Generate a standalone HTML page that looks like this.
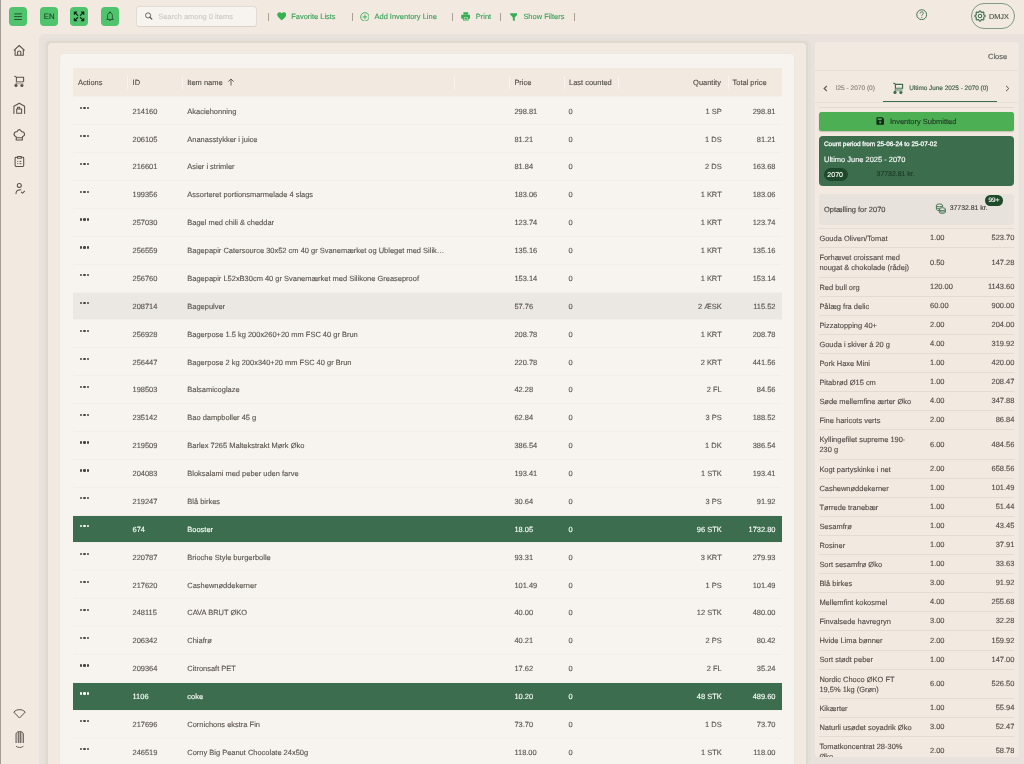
<!DOCTYPE html>
<html><head><meta charset="utf-8"><title>Inventory</title>
<style>
*{box-sizing:border-box;margin:0;padding:0}
html,body{-webkit-font-smoothing:antialiased;text-rendering:geometricPrecision;width:1024px;height:764px;overflow:hidden;background:#f2e9e0;font-family:"Liberation Sans",sans-serif;color:#5c5650;font-size:7.47px;line-height:1}
.a{position:absolute}
.lb{left:0;top:0;width:1px;height:764px;background:#a39d97}
.gb{top:7px;width:18px;height:18.5px;background:#50c46d;border-radius:4px}
.gb svg{position:absolute;left:0;top:0}
.search{left:136px;top:5.9px;width:121px;height:21.2px;background:#f7f4f0;border:1px solid #e0dbd4;border-bottom-color:#d9d3cc;border-radius:3.5px}
.search .ph{position:absolute;left:21.2px;top:5.9px;color:#cdc8c2;font-size:7.47px}
.sep{top:12.8px;width:1px;height:7.9px;background:#ab9f90}
.tb{top:13.4px;color:#3aa158;font-size:7.47px;white-space:nowrap}
.frame{left:39px;top:34px;width:990px;height:740px;background:#e8e1dc;border-radius:5px 0 0 0}
.mainp{left:48px;top:42.8px;width:758px;height:730px;background:#f2e9e0;border-radius:3.5px}
.cont{left:59px;top:53.2px;width:736px;height:720px;background:#f7f4f0;border:1px solid #ece8e3;border-radius:4px}
.tbl{left:73px;top:68px;width:708.5px}
.th{position:relative;height:28.4px;background:#f2e9e0;color:#534d47}
.th .h{position:absolute;top:10.8px;white-space:nowrap}
.th .vs{position:absolute;top:8.4px;width:1px;height:12.5px;background:#f8f5f1}
.tr{position:relative;height:27.88px;border-top:1px solid #f2eeea;color:#5a534d;background-clip:padding-box}
.tr.hov{background:#ebe7e3}
.tr.sel{background:#3b6d4e;color:#fff;background-clip:padding-box}
.c{position:absolute;top:10.3px;white-space:nowrap}
.dots{left:7px;top:9.6px}
.dots i{position:absolute;top:-0.1px;width:2.25px;height:2.25px;border-radius:50%;background:#4a443f}
.dots i:nth-child(1){left:0.1px}
.dots i:nth-child(2){left:3.4px}
.dots i:nth-child(3){left:6.7px}
.sel .dots i{background:#fff}
.cid{left:59.5px}
.cname{left:114.3px}
.cprice{left:441.4px}
.clast{left:495.6px}
.cqty{right:59.8px}
.ctot{right:6px}
.rp{left:815px;top:42px;width:203.3px;box-shadow:1px 0 0 #ece8e4;height:714.5px;background:#f2e9e0;border-radius:3.5px;overflow:hidden}
.close{left:173px;top:10.5px;color:#545b54}
.hdiv{left:0;top:27.8px;width:100%;height:1.2px;background:#e5dfd7}
.tabs{left:0;top:29.6px;width:100%;height:31px}
.sr{position:relative;border-top:1px solid #e2dcd5;padding:4.9px 0 3.12px 0;line-height:10.1px;font-size:7.47px;color:#524c47}
.sn{padding-left:0}
.sq{position:absolute;left:110.6px;top:50%;margin-top:-5px}
.st{position:absolute;right:0;top:50%;margin-top:-5px}

#wrap{position:absolute;left:0;top:0;width:1024px;height:764px;overflow:hidden;will-change:transform;-webkit-text-stroke-width:0.12px}
.ring1{left:43.4px;top:38.8px;width:767.2px;height:740px;background:#e3dfd9;border-radius:6px}
.ring2{left:46.1px;top:41.3px;width:761.8px;height:740px;background:#dfd8cf;border-radius:4px}

</style></head><body>
<div id="wrap">
<div class="a lb"></div>
<!-- top green buttons -->
<div class="a gb" style="left:9px"><svg width="18" height="18.5" viewBox="0 0 18 18.5"><path d="M5.2 6.9H12.9M5.2 9.6H12.9M5.2 12.5H12.9" stroke="#1e3b26" stroke-width="0.85" fill="none"/></svg></div>
<div class="a gb" style="left:39.7px"><span class="a" style="left:4.1px;top:5.6px;font-size:7.8px;color:#1f3d28">EN</span></div>
<div class="a gb" style="left:70.1px"><svg width="18" height="18.5" viewBox="0 0 18 18.5"><g fill="#13261a" stroke="#13261a" stroke-width="1.2"><path d="M4.5 5.3L8 8.6M13.6 5.3L10.1 8.6M4.5 13.6L8 10.3M13.6 13.6L10.1 10.3" fill="none"/><path d="M4 4.8h3.2L4 8z M14.1 4.8h-3.2l3.2 3.2z M4 14.1h3.2L4 10.9z M14.1 14.1h-3.2l3.2-3.2z" stroke-width="0.4"/></g></svg></div>
<div class="a gb" style="left:101px"><svg width="18" height="18.5" viewBox="0 0 18 18.5"><path d="M9 5.6C7.4 5.6 6.6 7 6.6 8.7V10.9C6.6 11.6 6.1 12.1 5.6 12.4H12.4C11.9 12.1 11.4 11.6 11.4 10.9V8.7C11.4 7 10.6 5.6 9 5.6Z M9 4.9V5.6 M8 13.1C8.3 13.8 9.7 13.8 10 13.1" stroke="#1f3a26" stroke-width="0.75" fill="none" stroke-linejoin="round" stroke-linecap="round"/></svg></div>
<!-- search -->
<div class="a search"><svg class="a" style="left:7.2px;top:4.3px" width="9" height="9" viewBox="0 0 9 9"><circle cx="4.1" cy="4.4" r="2.55" stroke="#625d57" stroke-width="0.95" fill="none"/><path d="M5.9 6.2L7.8 8" stroke="#625d57" stroke-width="1.2" stroke-linecap="round"/></svg><span class="ph">Search among 0 items</span></div>
<!-- toolbar -->
<div class="a sep" style="left:268.3px"></div>
<svg class="a" style="left:276.8px;top:12px" width="9.4" height="8.7" viewBox="0 0 24 22"><path d="M12 21.5L10.3 19.9C4.2 14.4 0.5 11 0.5 6.5C0.5 3 3.2 0.3 6.7 0.3C8.7 0.3 10.7 1.3 12 2.8C13.3 1.3 15.3 0.3 17.3 0.3C20.8 0.3 23.5 3 23.5 6.5C23.5 11 19.8 14.4 13.7 19.9Z" fill="#35b152"/></svg>
<span class="a tb" style="left:291.2px">Favorite Lists</span>
<div class="a sep" style="left:351.6px"></div>
<svg class="a" style="left:359.6px;top:11.6px" width="9.8" height="9.8" viewBox="0 0 10 10"><circle cx="5" cy="5" r="4.3" stroke="#37ae55" stroke-width="0.95" fill="none"/><path d="M5 2.7V7.3M2.7 5H7.3" stroke="#37ae55" stroke-width="0.95"/></svg>
<span class="a tb" style="left:374.5px">Add Inventory Line</span>
<div class="a sep" style="left:452.2px"></div>
<svg class="a" style="left:460.6px;top:12.2px" width="9.6" height="8.8" viewBox="0 0 12 11"><path d="M3 0.3H9V3H3Z M0.3 3.5H11.7V8.3H9.5V10.7H2.5V8.3H0.3Z" fill="#35ae52"/><rect x="3.6" y="6.5" width="4.8" height="3.3" fill="#f2e9e0"/><rect x="4.2" y="7.1" width="3.6" height="2.2" fill="#35ae52"/></svg>
<span class="a tb" style="left:475.8px">Print</span>
<div class="a sep" style="left:500.2px"></div>
<svg class="a" style="left:509.6px;top:12.8px" width="7.6" height="8.6" viewBox="0 0 8 9"><path d="M0.2 0.3H7.8V1.6L5 4.6V8.7L3 7.6V4.6L0.2 1.6Z" fill="#36ad53"/></svg>
<span class="a tb" style="left:523.4px">Show Filters</span>
<div class="a sep" style="left:574px"></div>
<!-- help + user -->
<svg class="a" style="left:915.6px;top:8.8px" width="11.4" height="11.4" viewBox="0 0 12 12"><circle cx="6" cy="6" r="5.2" stroke="#3c6e4d" stroke-width="1" fill="none"/><path d="M4.3 4.6C4.3 3.6 5 3 6 3C7 3 7.7 3.6 7.7 4.5C7.7 5.6 6.1 5.7 6.1 7" stroke="#3c6e4d" stroke-width="1" fill="none"/><circle cx="6.1" cy="8.8" r="0.6" fill="#3c6e4d"/></svg>
<div class="a" style="left:970.6px;top:3.4px;width:44px;height:26px;border:1px solid #7e9a83;border-radius:13px"></div>
<svg class="a" style="left:974.1px;top:10.4px" width="12" height="12" viewBox="0 0 12 12"><path fill="none" stroke="#3b7050" stroke-width="1.05" stroke-linejoin="round" d="M11.10 6.00 L11.10 6.20 L11.08 6.40 L11.06 6.60 L11.04 6.80 L10.46 6.89 L9.89 6.93 L9.85 7.09 L9.80 7.24 L9.75 7.38 L9.70 7.53 L9.63 7.67 L9.56 7.82 L9.49 7.95 L9.41 8.09 L9.78 8.53 L10.13 9.00 L10.01 9.16 L9.88 9.31 L9.75 9.46 L9.61 9.61 L9.46 9.75 L9.31 9.88 L9.16 10.01 L9.00 10.13 L8.53 9.78 L8.09 9.41 L7.95 9.49 L7.82 9.56 L7.67 9.63 L7.53 9.70 L7.38 9.75 L7.24 9.80 L7.09 9.85 L6.93 9.89 L6.89 10.46 L6.80 11.04 L6.60 11.06 L6.40 11.08 L6.20 11.10 L6.00 11.10 L5.80 11.10 L5.60 11.08 L5.40 11.06 L5.20 11.04 L5.11 10.46 L5.07 9.89 L4.91 9.85 L4.76 9.80 L4.62 9.75 L4.47 9.70 L4.33 9.63 L4.18 9.56 L4.05 9.49 L3.91 9.41 L3.47 9.78 L3.00 10.13 L2.84 10.01 L2.69 9.88 L2.54 9.75 L2.39 9.61 L2.25 9.46 L2.12 9.31 L1.99 9.16 L1.87 9.00 L2.22 8.53 L2.59 8.09 L2.51 7.95 L2.44 7.82 L2.37 7.67 L2.30 7.53 L2.25 7.38 L2.20 7.24 L2.15 7.09 L2.11 6.93 L1.54 6.89 L0.96 6.80 L0.94 6.60 L0.92 6.40 L0.90 6.20 L0.90 6.00 L0.90 5.80 L0.92 5.60 L0.94 5.40 L0.96 5.20 L1.54 5.11 L2.11 5.07 L2.15 4.91 L2.20 4.76 L2.25 4.62 L2.30 4.47 L2.37 4.33 L2.44 4.18 L2.51 4.05 L2.59 3.91 L2.22 3.47 L1.87 3.00 L1.99 2.84 L2.12 2.69 L2.25 2.54 L2.39 2.39 L2.54 2.25 L2.69 2.12 L2.84 1.99 L3.00 1.87 L3.47 2.22 L3.91 2.59 L4.05 2.51 L4.18 2.44 L4.33 2.37 L4.47 2.30 L4.62 2.25 L4.76 2.20 L4.91 2.15 L5.07 2.11 L5.11 1.54 L5.20 0.96 L5.40 0.94 L5.60 0.92 L5.80 0.90 L6.00 0.90 L6.20 0.90 L6.40 0.92 L6.60 0.94 L6.80 0.96 L6.89 1.54 L6.93 2.11 L7.09 2.15 L7.24 2.20 L7.38 2.25 L7.53 2.30 L7.67 2.37 L7.82 2.44 L7.95 2.51 L8.09 2.59 L8.53 2.22 L9.00 1.87 L9.16 1.99 L9.31 2.12 L9.46 2.25 L9.61 2.39 L9.75 2.54 L9.88 2.69 L10.01 2.84 L10.13 3.00 L9.78 3.47 L9.41 3.91 L9.49 4.05 L9.56 4.18 L9.63 4.33 L9.70 4.47 L9.75 4.62 L9.80 4.76 L9.85 4.91 L9.89 5.07 L10.46 5.11 L11.04 5.20 L11.06 5.40 L11.08 5.60 L11.10 5.80Z"/><circle cx="6" cy="6" r="1.75" fill="none" stroke="#3b7050" stroke-width="1.05"/></svg>
<span class="a" style="left:989px;top:12.6px;font-size:7.3px;color:#475243">DMJX</span>
<!-- sidebar icons -->
<svg class="a" style="left:0;top:0" width="40" height="200" viewBox="0 0 40 200"><g stroke="#5a524b" stroke-width="1.05" fill="none" stroke-linejoin="round" stroke-linecap="round">
<path d="M14.2 50.2L19.2 45.5L24.2 50.2M15.1 49.3V55.2H23.3V49.3M17.6 55.2V52.1C17.6 50.6 20.8 50.6 20.8 52.1V55.2"/>
<path d="M14.7 76.2L16.4 77.1V84.4M16.4 77.3H23.6V81.4H16.4"/>
<path d="M13.9 113.4V106.3L19.3 103.3L24.6 106.3V113.4M16.7 113.3V109H21.6V113.3ZM17.6 109V107.3H19.7V109"/>
<path d="M16.2 136.8C14.5 136.2 13.8 134.8 14.2 133.4C14.6 132 16 131.5 17 131.8C17.5 130.2 18.3 129.6 19.3 129.6C20.3 129.6 21.1 130.2 21.6 131.8C22.6 131.5 24 132 24.4 133.4C24.8 134.8 24.1 136.2 22.4 136.8V140H16.2ZM16.2 137.8H22.4"/>
<path d="M17.3 157.3H16C15.4 157.3 15.1 157.6 15.1 158.2V165.6C15.1 166.2 15.4 166.5 16 166.5H22.8C23.4 166.5 23.7 166.2 23.7 165.6V158.2C23.7 157.6 23.4 157.3 22.8 157.3H21.5M17.5 156.4H21.3V158.3H17.5Z"/>
<circle cx="19.3" cy="185.5" r="2"/>
<path d="M16 193.6C16 191.3 17.3 189.8 20.8 189.8M21.4 192.1L22.6 193.2L24.6 191.2"/>
</g>
<g fill="#5a524b"><circle cx="16" cy="85.4" r="1.55"/><circle cx="21.9" cy="85.4" r="1.55"/><rect x="16.4" y="81.4" width="7" height="2.9" fill="#bdb6ae"/>
<rect x="17.2" y="160.9" width="1" height="0.9"/><rect x="19.5" y="160.9" width="1.9" height="0.9"/><rect x="17.2" y="163.2" width="1" height="0.9"/><rect x="19.5" y="163.2" width="1.9" height="0.9"/></g>
</svg>
<svg class="a" style="left:13.2px;top:708.9px" width="13" height="9.6" viewBox="0 0 26 19"><path d="M1.5 6C8 -0.5 18 -0.5 24.5 6L13 18Z" stroke="#5a524b" stroke-width="2" fill="none" stroke-linejoin="round"/></svg>
<svg class="a" style="left:15.3px;top:729.8px" width="9.4" height="18.6" viewBox="0 0 19 37"><path d="M2 26V8C2 1 17 1 17 8V26Z" fill="#c9c3bc"/><path d="M2 26V8C2 1 17 1 17 8V26M7.5 3V26M11.5 3V26M2 32.5C6 36 13 36 17 32.5" stroke="#5a524b" stroke-width="1.8" fill="none"/></svg>
<!-- frame -->
<div class="a frame"></div>
<div class="a ring1"></div>
<div class="a ring2"></div>
<div class="a mainp"></div>
<div class="a cont"></div>
<div class="a tbl">
<div class="th">
<span class="h" style="left:5px">Actions</span>
<div class="vs" style="left:54.3px"></div>
<span class="h" style="left:59.6px">ID</span>
<div class="vs" style="left:109px"></div>
<span class="h" style="left:114.3px">Item name</span>
<svg class="a" style="left:154.2px;top:9.6px" width="8" height="8" viewBox="0 0 8 8"><path d="M4 7.5V1M1.3 3.6L4 1L6.7 3.6" stroke="#5a544e" stroke-width="0.9" fill="none"/></svg>
<div class="vs" style="left:381.4px"></div>
<div class="vs" style="left:436.2px"></div>
<span class="h" style="left:441.4px">Price</span>
<div class="vs" style="left:490.8px"></div>
<span class="h" style="left:496px">Last counted</span>
<div class="vs" style="left:544.5px"></div>
<span class="h" style="right:60.6px">Quantity</span>
<div class="vs" style="left:654.5px"></div>
<span class="h" style="left:659.5px">Total price</span>
</div>
<div class="tr "><div class="c dots"><i></i><i></i><i></i></div><div class="c cid">214160</div><div class="c cname">Akaciehonning</div><div class="c cprice">298.81</div><div class="c clast">0</div><div class="c cqty">1 SP</div><div class="c ctot">298.81</div></div>
<div class="tr "><div class="c dots"><i></i><i></i><i></i></div><div class="c cid">206105</div><div class="c cname">Ananasstykker i juice</div><div class="c cprice">81.21</div><div class="c clast">0</div><div class="c cqty">1 DS</div><div class="c ctot">81.21</div></div>
<div class="tr "><div class="c dots"><i></i><i></i><i></i></div><div class="c cid">216601</div><div class="c cname">Asier i strimler</div><div class="c cprice">81.84</div><div class="c clast">0</div><div class="c cqty">2 DS</div><div class="c ctot">163.68</div></div>
<div class="tr "><div class="c dots"><i></i><i></i><i></i></div><div class="c cid">199356</div><div class="c cname">Assorteret portionsmarmelade 4 slags</div><div class="c cprice">183.06</div><div class="c clast">0</div><div class="c cqty">1 KRT</div><div class="c ctot">183.06</div></div>
<div class="tr "><div class="c dots"><i></i><i></i><i></i></div><div class="c cid">257030</div><div class="c cname">Bagel med chili &amp; cheddar</div><div class="c cprice">123.74</div><div class="c clast">0</div><div class="c cqty">1 KRT</div><div class="c ctot">123.74</div></div>
<div class="tr "><div class="c dots"><i></i><i></i><i></i></div><div class="c cid">256559</div><div class="c cname">Bagepapir Catersource 30x52 cm 40 gr Svanemærket og Ubleget med Silik…</div><div class="c cprice">135.16</div><div class="c clast">0</div><div class="c cqty">1 KRT</div><div class="c ctot">135.16</div></div>
<div class="tr "><div class="c dots"><i></i><i></i><i></i></div><div class="c cid">256760</div><div class="c cname">Bagepapir L52xB30cm 40 gr Svanemærket med Silikone Greaseproof</div><div class="c cprice">153.14</div><div class="c clast">0</div><div class="c cqty">1 KRT</div><div class="c ctot">153.14</div></div>
<div class="tr hov"><div class="c dots"><i></i><i></i><i></i></div><div class="c cid">208714</div><div class="c cname">Bagepulver</div><div class="c cprice">57.76</div><div class="c clast">0</div><div class="c cqty">2 ÆSK</div><div class="c ctot">115.52</div></div>
<div class="tr "><div class="c dots"><i></i><i></i><i></i></div><div class="c cid">256928</div><div class="c cname">Bagerpose 1.5 kg 200x260+20 mm FSC 40 gr Brun</div><div class="c cprice">208.78</div><div class="c clast">0</div><div class="c cqty">1 KRT</div><div class="c ctot">208.78</div></div>
<div class="tr "><div class="c dots"><i></i><i></i><i></i></div><div class="c cid">256447</div><div class="c cname">Bagerpose 2 kg 200x340+20 mm FSC 40 gr Brun</div><div class="c cprice">220.78</div><div class="c clast">0</div><div class="c cqty">2 KRT</div><div class="c ctot">441.56</div></div>
<div class="tr "><div class="c dots"><i></i><i></i><i></i></div><div class="c cid">198503</div><div class="c cname">Balsamicoglaze</div><div class="c cprice">42.28</div><div class="c clast">0</div><div class="c cqty">2 FL</div><div class="c ctot">84.56</div></div>
<div class="tr "><div class="c dots"><i></i><i></i><i></i></div><div class="c cid">235142</div><div class="c cname">Bao dampboller 45 g</div><div class="c cprice">62.84</div><div class="c clast">0</div><div class="c cqty">3 PS</div><div class="c ctot">188.52</div></div>
<div class="tr "><div class="c dots"><i></i><i></i><i></i></div><div class="c cid">219509</div><div class="c cname">Barlex 7265 Maltekstrakt Mørk Øko</div><div class="c cprice">386.54</div><div class="c clast">0</div><div class="c cqty">1 DK</div><div class="c ctot">386.54</div></div>
<div class="tr "><div class="c dots"><i></i><i></i><i></i></div><div class="c cid">204083</div><div class="c cname">Bloksalami med peber uden farve</div><div class="c cprice">193.41</div><div class="c clast">0</div><div class="c cqty">1 STK</div><div class="c ctot">193.41</div></div>
<div class="tr "><div class="c dots"><i></i><i></i><i></i></div><div class="c cid">219247</div><div class="c cname">Blå birkes</div><div class="c cprice">30.64</div><div class="c clast">0</div><div class="c cqty">3 PS</div><div class="c ctot">91.92</div></div>
<div class="tr sel"><div class="c dots"><i></i><i></i><i></i></div><div class="c cid">674</div><div class="c cname">Booster</div><div class="c cprice">18.05</div><div class="c clast">0</div><div class="c cqty">96 STK</div><div class="c ctot">1732.80</div></div>
<div class="tr "><div class="c dots"><i></i><i></i><i></i></div><div class="c cid">220787</div><div class="c cname">Brioche Style burgerbolle</div><div class="c cprice">93.31</div><div class="c clast">0</div><div class="c cqty">3 KRT</div><div class="c ctot">279.93</div></div>
<div class="tr "><div class="c dots"><i></i><i></i><i></i></div><div class="c cid">217620</div><div class="c cname">Cashewnøddekerner</div><div class="c cprice">101.49</div><div class="c clast">0</div><div class="c cqty">1 PS</div><div class="c ctot">101.49</div></div>
<div class="tr "><div class="c dots"><i></i><i></i><i></i></div><div class="c cid">248115</div><div class="c cname">CAVA BRUT ØKO</div><div class="c cprice">40.00</div><div class="c clast">0</div><div class="c cqty">12 STK</div><div class="c ctot">480.00</div></div>
<div class="tr "><div class="c dots"><i></i><i></i><i></i></div><div class="c cid">206342</div><div class="c cname">Chiafrø</div><div class="c cprice">40.21</div><div class="c clast">0</div><div class="c cqty">2 PS</div><div class="c ctot">80.42</div></div>
<div class="tr "><div class="c dots"><i></i><i></i><i></i></div><div class="c cid">209364</div><div class="c cname">Citronsaft PET</div><div class="c cprice">17.62</div><div class="c clast">0</div><div class="c cqty">2 FL</div><div class="c ctot">35.24</div></div>
<div class="tr sel"><div class="c dots"><i></i><i></i><i></i></div><div class="c cid">1106</div><div class="c cname">coke</div><div class="c cprice">10.20</div><div class="c clast">0</div><div class="c cqty">48 STK</div><div class="c ctot">489.60</div></div>
<div class="tr "><div class="c dots"><i></i><i></i><i></i></div><div class="c cid">217696</div><div class="c cname">Cornichons ekstra Fin</div><div class="c cprice">73.70</div><div class="c clast">0</div><div class="c cqty">1 DS</div><div class="c ctot">73.70</div></div>
<div class="tr "><div class="c dots"><i></i><i></i><i></i></div><div class="c cid">246519</div><div class="c cname">Corny Big Peanut Chocolate 24x50g</div><div class="c cprice">118.00</div><div class="c clast">0</div><div class="c cqty">1 STK</div><div class="c ctot">118.00</div></div>
</div>
<!-- right panel -->
<div class="a rp">
<span class="a close">Close</span>
<div class="a hdiv"></div>
<svg class="a" style="left:8.2px;top:43.4px" width="5" height="7" viewBox="0 0 5 7"><path d="M3.8 1L1.2 3.5L3.8 6" stroke="#6a625a" stroke-width="1.25" fill="none"/></svg>
<span class="a" style="left:21px;top:43.8px;font-size:6.55px;color:#8a8177">l25 - 2070 (0)</span>
<svg class="a" style="left:75.8px;top:37.9px" width="14" height="16" viewBox="12 73 14 16"><g stroke="#3c6e4d" stroke-width="1.15" fill="none" stroke-linejoin="round" stroke-linecap="round"><path d="M14.7 76.2L16.4 77.1V84.4M16.4 77.3H23.6V81.4H16.4"/></g><g fill="#3c6e4d"><circle cx="16" cy="85.4" r="1.6"/><circle cx="21.9" cy="85.4" r="1.6"/><rect x="16.4" y="81.4" width="7" height="2.9" fill="#9db5a3"/></g></svg>
<span class="a" style="left:94.2px;top:43.6px;font-size:6.4px;color:#3a5e45;-webkit-text-stroke-width:0.15px">Ultimo June 2025 - 2070 (0)</span>
<svg class="a" style="left:190px;top:43.3px" width="5" height="7" viewBox="0 0 5 7"><path d="M1 0.8L3.8 3.5L1 6.2" stroke="#5a544e" stroke-width="1" fill="none"/></svg>
<div class="a" style="left:68px;top:58.7px;width:114px;height:1.6px;background:#3c6e4d"></div>
<div class="a" style="left:0;top:60.2px;width:100%;height:1px;background:#e6e0d9"></div>
<div class="a" style="left:4.4px;top:65.2px;width:195px;height:1px;background:#e2dcd5"></div>
<div class="a" style="left:4.4px;top:70px;width:195px;height:19.3px;background:#4caf53;border-radius:2.5px;box-shadow:0 1px 1.5px rgba(0,0,0,0.18)"></div>
<svg class="a" style="left:61px;top:75.2px" width="8.4" height="8.2" viewBox="0 0 12 12"><path d="M0.5 1.5C0.5 1 1 0.5 1.5 0.5H9L11.5 3V10.5C11.5 11 11 11.5 10.5 11.5H1.5C1 11.5 0.5 11 0.5 10.5Z" fill="#13261a"/><rect x="2.3" y="2" width="6" height="2.6" fill="#4caf53"/><circle cx="6" cy="8" r="1.6" fill="#4caf53"/></svg>
<span class="a" style="left:75px;top:76.4px;font-size:7.47px;color:#1f3424">Inventory Submitted</span>
<div class="a" style="left:4.4px;top:93.5px;width:195px;height:50.3px;background:#3c6e4d;border-radius:4px"></div>
<span class="a" style="left:9px;top:99.9px;font-size:6.4px;color:#fff;-webkit-text-stroke-width:0.25px">Count period from 25-06-24 to 25-07-02</span>
<span class="a" style="left:9px;top:114.4px;font-size:7.47px;color:#fff">Ultimo June 2025 - 2070</span>
<div class="a" style="left:8.9px;top:126.3px;width:23.9px;height:13.2px;background:#1d4829;border-radius:6.6px"></div>
<span class="a" style="left:12.3px;top:129.8px;font-size:7.06px;color:#fff">2070</span>
<span class="a" style="left:61.6px;top:130.2px;font-size:6.9px;color:#1d3b25;-webkit-text-stroke-width:0.2px">37732.81 kr.</span>
<div class="a" style="left:4.4px;top:152.4px;width:195px;height:30.3px;background:#e8e2dc;border-radius:4px"></div>
<span class="a" style="left:9px;top:164.1px;font-size:7.47px;color:#48423d">Optælling for 2070</span>
<svg class="a" style="left:119.6px;top:161.4px" width="11.8" height="11.4" viewBox="0 0 24 24"><g stroke="#3c6e4d" stroke-width="1.9" fill="none"><ellipse cx="9" cy="5" rx="6.5" ry="3"/><path d="M2.5 5V13C2.5 14.6 5.4 16 9 16M15.5 5V9M2.5 9C2.5 10.6 5.4 12 9 12"/><ellipse cx="15" cy="13" rx="6.5" ry="3"/><path d="M8.5 13V19C8.5 20.6 11.4 22 15 22C18.6 22 21.5 20.6 21.5 19V13M8.5 16C8.5 17.6 11.4 19 15 19C18.6 19 21.5 17.6 21.5 16"/></g></svg>
<span class="a" style="left:134.7px;top:164.2px;font-size:6.9px;color:#3f3a36">37732.81 kr.</span>
<div class="a" style="left:170px;top:153.4px;width:17.6px;height:10.6px;background:#1f4a2b;border-radius:5.3px"></div>
<span class="a" style="left:173.5px;top:156.2px;font-size:6.48px;color:#fff">99+</span>
<div class="a" style="left:4.4px;top:186.4px;width:195px">
<div class="sr"><div class="sn">Gouda Oliven/Tomat</div><div class="sq">1.00</div><div class="st">523.70</div></div>
<div class="sr"><div class="sn">Forhævet croissant med<br>nougat &amp; chokolade (rådej)</div><div class="sq">0.50</div><div class="st">147.28</div></div>
<div class="sr"><div class="sn">Red bull org</div><div class="sq">120.00</div><div class="st">1143.60</div></div>
<div class="sr"><div class="sn">Pålæg fra delic</div><div class="sq">60.00</div><div class="st">900.00</div></div>
<div class="sr"><div class="sn">Pizzatopping 40+</div><div class="sq">2.00</div><div class="st">204.00</div></div>
<div class="sr"><div class="sn">Gouda i skiver á 20 g</div><div class="sq">4.00</div><div class="st">319.92</div></div>
<div class="sr"><div class="sn">Pork Haxe Mini</div><div class="sq">1.00</div><div class="st">420.00</div></div>
<div class="sr"><div class="sn">Pitabrød Ø15 cm</div><div class="sq">1.00</div><div class="st">208.47</div></div>
<div class="sr"><div class="sn">Søde mellemfine ærter Øko</div><div class="sq">4.00</div><div class="st">347.88</div></div>
<div class="sr"><div class="sn">Fine haricots verts</div><div class="sq">2.00</div><div class="st">86.84</div></div>
<div class="sr"><div class="sn">Kyllingefilet supreme 190-<br>230 g</div><div class="sq">6.00</div><div class="st">484.56</div></div>
<div class="sr"><div class="sn">Kogt partyskinke i net</div><div class="sq">2.00</div><div class="st">658.56</div></div>
<div class="sr"><div class="sn">Cashewnøddekerner</div><div class="sq">1.00</div><div class="st">101.49</div></div>
<div class="sr"><div class="sn">Tørrede tranebær</div><div class="sq">1.00</div><div class="st">51.44</div></div>
<div class="sr"><div class="sn">Sesamfrø</div><div class="sq">1.00</div><div class="st">43.45</div></div>
<div class="sr"><div class="sn">Rosiner</div><div class="sq">1.00</div><div class="st">37.91</div></div>
<div class="sr"><div class="sn">Sort sesamfrø Øko</div><div class="sq">1.00</div><div class="st">33.63</div></div>
<div class="sr"><div class="sn">Blå birkes</div><div class="sq">3.00</div><div class="st">91.92</div></div>
<div class="sr"><div class="sn">Mellemfint kokosmel</div><div class="sq">4.00</div><div class="st">255.68</div></div>
<div class="sr"><div class="sn">Finvalsede havregryn</div><div class="sq">3.00</div><div class="st">32.28</div></div>
<div class="sr"><div class="sn">Hvide Lima bønner</div><div class="sq">2.00</div><div class="st">159.92</div></div>
<div class="sr"><div class="sn">Sort stødt peber</div><div class="sq">1.00</div><div class="st">147.00</div></div>
<div class="sr"><div class="sn">Nordic Choco ØKO FT<br>19,5% 1kg (Grøn)</div><div class="sq">6.00</div><div class="st">526.50</div></div>
<div class="sr"><div class="sn">Kikærter</div><div class="sq">1.00</div><div class="st">55.94</div></div>
<div class="sr"><div class="sn">Naturli usødet soyadrik Øko</div><div class="sq">3.00</div><div class="st">52.47</div></div>
<div class="sr"><div class="sn">Tomatkoncentrat 28-30%<br>Øko</div><div class="sq">2.00</div><div class="st">58.78</div></div>
</div>
</div>

</div>
</body></html>
